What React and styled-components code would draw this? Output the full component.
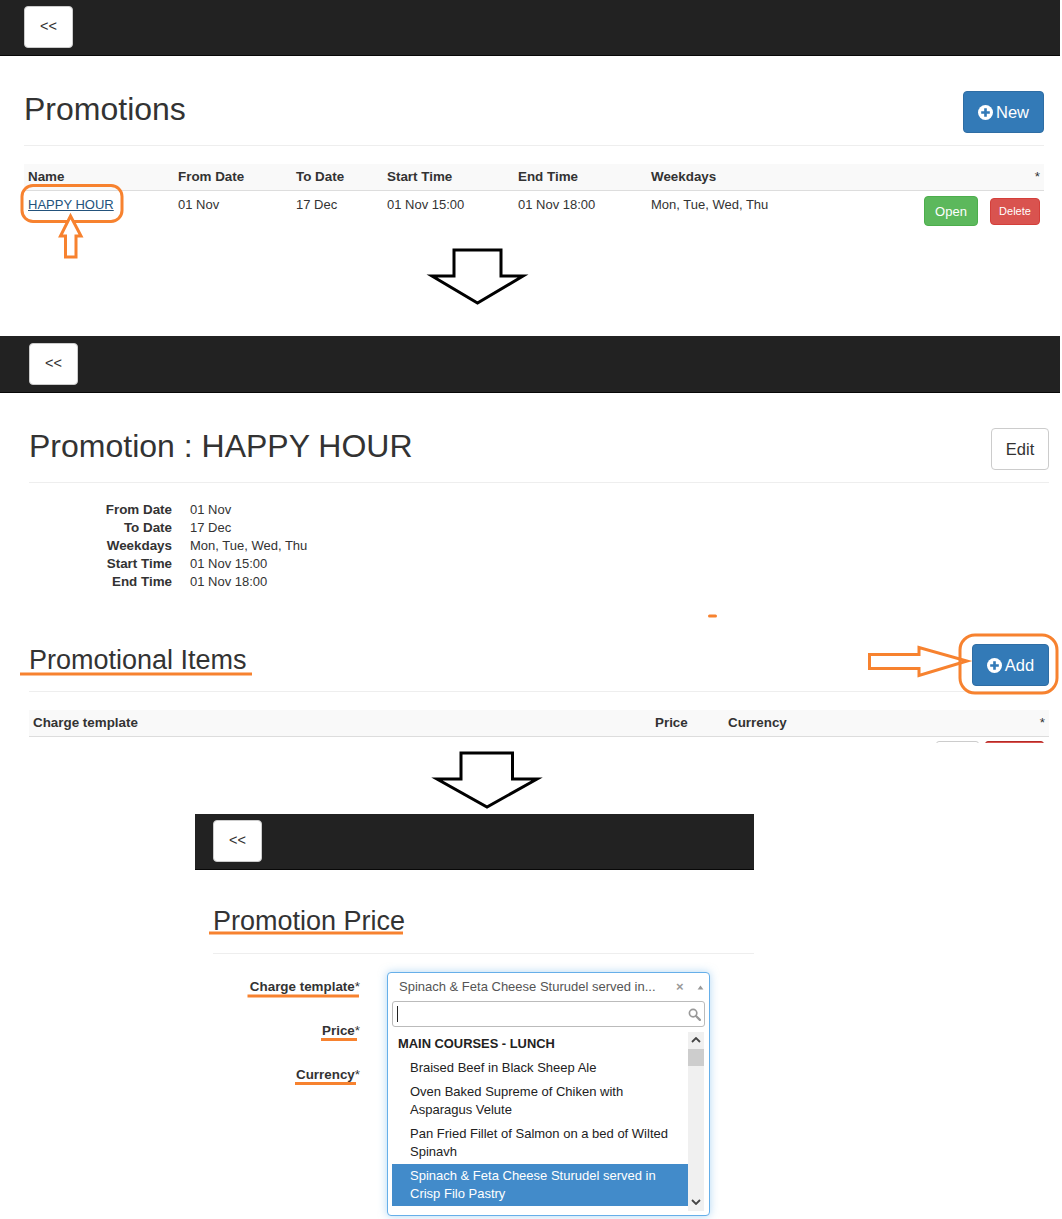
import React from 'react'
import styled, { createGlobalStyle } from 'styled-components'

const GlobalStyle = createGlobalStyle`
  html, body {
    margin: 0;
    padding: 0;
    background: #fff;
  }
  body {
    font-family: "Liberation Sans", Arial, sans-serif;
    font-size: 13px;
    line-height: 18px;
    color: #333;
  }
  * {
    box-sizing: border-box;
  }
`

const ORANGE = '#f7822f'

const PlusSign = ({ size = 15 }) => (
  <svg width={size} height={size} viewBox="0 0 16 16" aria-hidden="true">
    <circle cx="8" cy="8" r="8" fill="#fff" />
    <path d="M6.6 3.4h2.8v3.2h3.2v2.8H9.4v3.2H6.6V9.4H3.4V6.6h3.2z" fill="#337ab7" />
  </svg>
)

const BigArrow = ({ top, shaftLeft, shaftRight, headY, headLeft, headRight, tipX, tipY }) => (
  <polygon
    points={`${shaftLeft},${top} ${shaftRight},${top} ${shaftRight},${headY} ${headRight},${headY} ${tipX},${tipY} ${headLeft},${headY} ${shaftLeft},${headY}`}
    fill="#fff"
    stroke="#000"
    strokeWidth="3"
  />
)

const Annotations = () => (
  <Overlay viewBox="0 0 1062 1219" aria-hidden="true">
    <rect x="22" y="185.5" width="100" height="36" rx="11" fill="none" stroke={ORANGE} strokeWidth="3" />
    <polygon
      points="70.5,216 81,236 76,236 76,257 65.5,257 65.5,236 60.5,236"
      fill="#fff"
      stroke={ORANGE}
      strokeWidth="3"
    />
    <BigArrow top={250} shaftLeft={454} shaftRight={501} headY={276} headLeft={432} headRight={523} tipX={477.5} tipY={303} />
    <BigArrow top={753} shaftLeft={461} shaftRight={512.5} headY={779} headLeft={437} headRight={537} tipX={487} tipY={807} />

    <rect x="708" y="614.5" width="9" height="3" rx="1.5" fill={ORANGE} />
    <line x1="20" y1="674" x2="252" y2="674" stroke={ORANGE} strokeWidth="3" />
    <polygon
      points="869.5,654.5 919,654.5 919,647.5 967,661 919,675.5 919,668.5 869.5,668.5"
      fill="#fff"
      stroke={ORANGE}
      strokeWidth="3"
    />
    <rect x="960" y="635" width="97" height="58" rx="15" fill="none" stroke={ORANGE} strokeWidth="3" />

    <line x1="209" y1="933" x2="403" y2="933" stroke={ORANGE} strokeWidth="3" />
    <line x1="247.5" y1="996" x2="359" y2="996" stroke={ORANGE} strokeWidth="3" />
    <line x1="321" y1="1039.5" x2="357" y2="1039.5" stroke={ORANGE} strokeWidth="3" />
    <line x1="295" y1="1083.5" x2="356" y2="1083.5" stroke={ORANGE} strokeWidth="3" />
  </Overlay>
)

const App = () => (
  <Page>
    <GlobalStyle />

    <Screen $height={336}>
      <NavBar $inset={24} $height={56}>
        <BackButton>&lt;&lt;</BackButton>
      </NavBar>
      <Content $left={24} $right={16}>
        <PageHeader>
          <Title $size={32} $lift={6}>Promotions</Title>
          <PrimaryButton $width={81}>
            <PlusSign />
            New
          </PrimaryButton>
        </PageHeader>
        <HeadRow $columns="150px 118px 91px 131px 133px 1fr 20px">
          <span>Name</span>
          <span>From Date</span>
          <span>To Date</span>
          <span>Start Time</span>
          <span>End Time</span>
          <span>Weekdays</span>
          <Star>*</Star>
        </HeadRow>
        <BodyRow $columns="150px 118px 91px 131px 133px 1fr auto">
          <NameLink href="#happy-hour">HAPPY HOUR</NameLink>
          <span>01 Nov</span>
          <span>17 Dec</span>
          <span>01 Nov 15:00</span>
          <span>01 Nov 18:00</span>
          <span>Mon, Tue, Wed, Thu</span>
          <RowActions>
            <OpenButton>Open</OpenButton>
            <DeleteButton>Delete</DeleteButton>
          </RowActions>
        </BodyRow>
      </Content>
    </Screen>

    <Screen $height={478}>
      <NavBar $inset={29} $top={7} $height={57}>
        <BackButton>&lt;&lt;</BackButton>
      </NavBar>
      <Content $left={29} $right={11}>
        <PageHeader>
          <Title $size={32} $lift={6}>Promotion : HAPPY HOUR</Title>
          <DefaultButton>Edit</DefaultButton>
        </PageHeader>
        <Details>
          <dt>From Date</dt>
          <dd>01 Nov</dd>
          <dt>To Date</dt>
          <dd>17 Dec</dd>
          <dt>Weekdays</dt>
          <dd>Mon, Tue, Wed, Thu</dd>
          <dt>Start Time</dt>
          <dd>01 Nov 15:00</dd>
          <dt>End Time</dt>
          <dd>01 Nov 18:00</dd>
        </Details>
        <SectionHeader>
          <Title $size={27} $lift={11}>Promotional Items</Title>
          <PrimaryButton $width={77}>
            <PlusSign />
            Add
          </PrimaryButton>
        </SectionHeader>
        <HeadRow $columns="622px 73px 1fr 20px">
          <span>Charge template</span>
          <span>Price</span>
          <span>Currency</span>
          <Star>*</Star>
        </HeadRow>
        <ClippedRow>
          <GhostChip />
          <DangerChip />
        </ClippedRow>
      </Content>
    </Screen>

    <NarrowScreen>
      <NavBar $inset={18} $height={56}>
        <BackButton>&lt;&lt;</BackButton>
      </NavBar>
      <FormContent>
        <FormHeader>
          <Title $size={27}>Promotion Price</Title>
        </FormHeader>
        <Form>
          <FieldLabel>
            <b>Charge template</b>*
          </FieldLabel>
          <Field>
            <SelectBox>
              <Selection>
                <SelectionText>Spinach &amp; Feta Cheese Sturudel served in...</SelectionText>
                <ClearMark>×</ClearMark>
                <Caret viewBox="0 0 8 6" aria-hidden="true">
                  <path d="M4 .5 7.5 5.5H.5z" fill="#999" />
                </Caret>
              </Selection>
              <SearchBox>
                <TextCursor />
                <svg width="13" height="13" viewBox="0 0 14 14" aria-hidden="true">
                  <circle cx="5.5" cy="5.5" r="4" fill="none" stroke="#999" strokeWidth="1.8" />
                  <path d="m8.6 8.6 4.2 4.2" stroke="#999" strokeWidth="2.4" strokeLinecap="round" />
                </svg>
              </SearchBox>
              <Results>
                <Options>
                  <GroupTitle>MAIN COURSES - LUNCH</GroupTitle>
                  <Option>Braised Beef in Black Sheep Ale</Option>
                  <Option>Oven Baked Supreme of Chiken with Asparagus Velute</Option>
                  <Option>Pan Fried Fillet of Salmon on a bed of Wilted Spinavh</Option>
                  <Option $active>Spinach &amp; Feta Cheese Sturudel served in Crisp Filo Pastry</Option>
                </Options>
                <ScrollTrack>
                  <ScrollArrow viewBox="0 0 10 6" aria-hidden="true">
                    <path d="M1 5 5 1l4 4" fill="none" stroke="#444" strokeWidth="1.8" />
                  </ScrollArrow>
                  <ScrollThumb />
                  <ScrollSpacer />
                  <ScrollArrow viewBox="0 0 10 6" aria-hidden="true">
                    <path d="M1 1l4 4 4-4" fill="none" stroke="#444" strokeWidth="1.8" />
                  </ScrollArrow>
                </ScrollTrack>
              </Results>
            </SelectBox>
          </Field>
          <FieldLabel>
            <b>Price</b>*
          </FieldLabel>
          <Field />
          <FieldLabel>
            <b>Currency</b>*
          </FieldLabel>
          <Field />
        </Form>
      </FormContent>
    </NarrowScreen>

    <Annotations />
  </Page>
)

export default App

const Page = styled.div`
  position: relative;
  width: 1062px;
  height: 1219px;
  overflow: hidden;
`

const Overlay = styled.svg`
  position: absolute;
  top: 0;
  left: 0;
  width: 1062px;
  height: 1219px;
  pointer-events: none;
`

const Screen = styled.section`
  width: 1060px;
  height: ${props => props.$height}px;
  overflow: hidden;
`

const NarrowScreen = styled.section`
  width: 559px;
  margin-left: 195px;
`

const NavBar = styled.nav`
  height: ${props => props.$height}px;
  padding: ${props => props.$top || 6}px 0 0 ${props => props.$inset}px;
  background: #222;
  border-bottom: 1px solid #080808;
`

const BaseButton = styled.button`
  display: inline-flex;
  align-items: center;
  justify-content: center;
  padding: 0;
  font-family: inherit;
  border: 1px solid transparent;
  border-radius: 4px;
`

const BackButton = styled(BaseButton)`
  width: 49px;
  height: 42px;
  padding-bottom: 2px;
  font-size: 14.5px;
  color: #333;
  background: #fff;
  border-color: #ccc;
`

const PrimaryButton = styled(BaseButton)`
  gap: 3px;
  width: ${props => props.$width}px;
  height: 42px;
  font-size: 16.5px;
  color: #fff;
  background: #337ab7;
  border-color: #2e6da4;
`

const DefaultButton = styled(BaseButton)`
  width: 58px;
  height: 42px;
  font-size: 16.5px;
  color: #333;
  background: #fff;
  border-color: #ccc;
`

const OpenButton = styled(BaseButton)`
  width: 54px;
  height: 30px;
  font-size: 13px;
  color: #fff;
  background: #5cb85c;
  border-color: #4cae4c;
`

const DeleteButton = styled(BaseButton)`
  width: 50px;
  height: 27px;
  font-size: 11px;
  color: #fff;
  background: #d9534f;
  border-color: #d43f3a;
`

const Content = styled.div`
  padding: 0 ${props => props.$right}px 0 ${props => props.$left}px;
`

const PageHeader = styled.header`
  display: flex;
  align-items: center;
  justify-content: space-between;
  height: 90px;
  padding-top: 35px;
  padding-bottom: 12px;
  margin-bottom: 18px;
  border-bottom: 1px solid #eee;
`

const SectionHeader = styled(PageHeader)`
  height: 101px;
  padding-top: 54px;
  padding-bottom: 6px;
`

const Title = styled.h1`
  margin: 0 0 ${props => props.$lift || 0}px;
  font-size: ${props => props.$size}px;
  font-weight: 400;
  line-height: 36px;
  color: #333;
`

const HeadRow = styled.div`
  display: grid;
  grid-template-columns: ${props => props.$columns};
  align-items: center;
  height: 27px;
  padding: 0 4px;
  font-size: 13.4px;
  font-weight: 700;
  background: #f9f9f9;
  border-bottom: 1px solid #ddd;
`

const Star = styled.span`
  font-weight: 400;
  text-align: right;
`

const BodyRow = styled.div`
  display: grid;
  grid-template-columns: ${props => props.$columns};
  align-items: start;
  padding: 5px 4px 0;
  font-size: 13px;
`

const NameLink = styled.a`
  color: #23527c;
  text-decoration: underline;
`

const RowActions = styled.div`
  display: flex;
  align-items: center;
  gap: 12px;
`

const Details = styled.dl`
  display: grid;
  grid-template-columns: 143px 1fr;
  column-gap: 18px;
  margin: 0;
  font-size: 13px;

  dt {
    font-size: 13.4px;
    font-weight: 700;
    text-align: right;
  }

  dd {
    margin: 0;
  }
`

const ClippedRow = styled.div`
  display: flex;
  justify-content: flex-end;
  gap: 6px;
  height: 6px;
  padding: 4px 5px 0 0;
  overflow: hidden;
`

const GhostChip = styled.div`
  width: 43px;
  height: 20px;
  background: #fff;
  border: 1px solid #ccc;
  border-radius: 3px;
`

const DangerChip = styled.div`
  width: 59px;
  height: 20px;
  background: #d9534f;
  border: 1px solid #b52b27;
  border-radius: 3px;
`

const FormContent = styled.div`
  padding-left: 18px;
`

const FormHeader = styled.header`
  display: flex;
  align-items: center;
  height: 84px;
  padding-top: 18px;
  margin-bottom: 18px;
  border-bottom: 1px solid #eee;
`

const Form = styled.form`
  display: grid;
  grid-template-columns: 147px 1fr;
  grid-auto-rows: 44px;
  column-gap: 27px;
  align-items: start;
  padding-top: 6px;
`

const FieldLabel = styled.label`
  font-size: 13.4px;
  text-align: right;
  white-space: nowrap;
`

const Field = styled.div`
  position: relative;
`

const SelectBox = styled.div`
  position: absolute;
  top: -6px;
  left: 0;
  width: 323px;
  height: 244px;
  padding: 0 4px;
  background: #fff;
  border: 1px solid #66afe9;
  border-radius: 4px;
  box-shadow: 0 0 8px rgba(102, 175, 233, 0.5);
`

const Selection = styled.div`
  display: flex;
  align-items: center;
  height: 28px;
  padding: 0 1px 0 7px;
  font-size: 13px;
  color: #555;
`

const SelectionText = styled.span`
  flex: 1;
  min-width: 0;
  white-space: nowrap;
`

const ClearMark = styled.span`
  width: 10px;
  margin-left: 10px;
  font-size: 13px;
  font-weight: 700;
  color: #999;
`

const Caret = styled.svg`
  width: 7px;
  height: 5px;
  margin-left: 11px;
`

const SearchBox = styled.div`
  display: flex;
  align-items: center;
  justify-content: space-between;
  height: 26px;
  padding: 0 3px 0 4px;
  border: 1px solid #bbb;
  border-radius: 3px;
`

const TextCursor = styled.span`
  width: 1px;
  height: 16px;
  background: #222;
`

const Results = styled.div`
  display: flex;
  height: 179px;
  margin-top: 5px;
`

const Options = styled.div`
  width: 296px;
  font-size: 13px;
  color: #222;
`

const GroupTitle = styled.div`
  height: 24px;
  padding: 3px 6px 0;
  font-size: 12.9px;
  font-weight: 700;
`

const Option = styled.div`
  padding: 3px 8px 3px 18px;
  color: ${props => (props.$active ? '#fff' : '#222')};
  background: ${props => (props.$active ? '#428bca' : 'transparent')};
`

const ScrollTrack = styled.div`
  display: flex;
  flex-direction: column;
  align-items: center;
  width: 16px;
  background: #f0f0f0;
`

const ScrollArrow = styled.svg`
  flex: none;
  width: 10px;
  height: 6px;
  margin: 5px 0 6px;
`

const ScrollThumb = styled.div`
  width: 100%;
  height: 17px;
  background: #cdcdcd;
`

const ScrollSpacer = styled.div`
  flex: 1;
`
